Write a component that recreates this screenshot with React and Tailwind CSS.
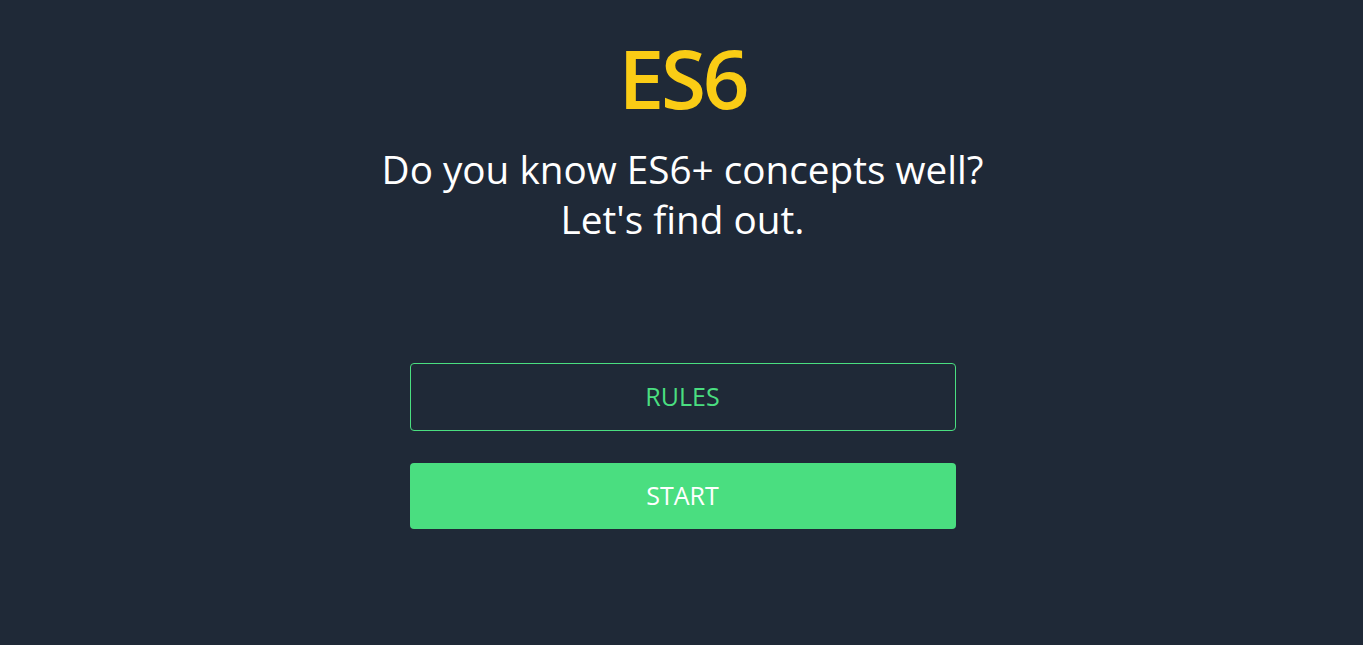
export default function App() {
  return (
    <div className="min-h-screen bg-[#1f2937] flex flex-col items-center pl-[2px] font-['Open_Sans',sans-serif]">
      <h1 className="mt-[36px] text-[82px] leading-none font-semibold tracking-[-0.04em] text-[#facc15]">ES6</h1>
      <p className="mt-[26px] text-[38.7px] leading-[50px] text-white text-center">
        Do you know ES6+ concepts well?
        <br />
        Let's find out.
      </p>
      <div className="mt-[119px] w-[546px] flex flex-col gap-[32px]">
        <button className="h-[68px] w-full rounded border border-[#4ade80] text-[25px] text-[#4ade80] uppercase">
          Rules
        </button>
        <button className="h-[66px] w-full rounded bg-[#4ade80] text-[25px] text-white uppercase">
          Start
        </button>
      </div>
    </div>
  );
}
